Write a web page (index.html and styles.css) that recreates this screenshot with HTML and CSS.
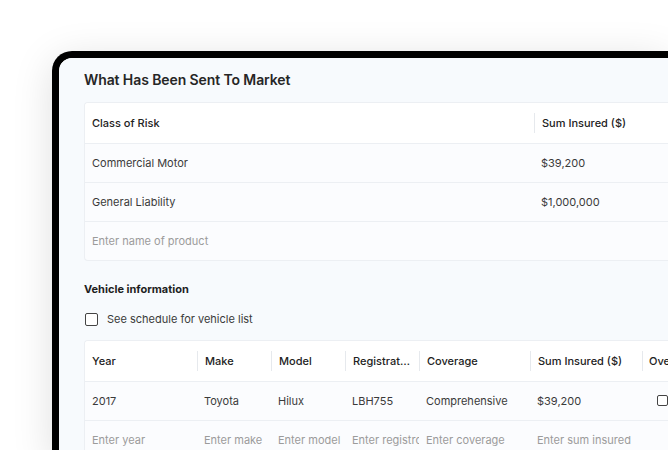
FILE: index.html
```html
<!DOCTYPE html>
<html>
<head>
<meta charset="utf-8">
<link rel="stylesheet" href="styles.css">
</head>
<body>
<div class="device">
  <div class="screen">
    <h1 class="title">What Has Been Sent To Market</h1>

    <div class="card risk">
      <div class="row head">
        <div class="cell c-class">Class of Risk</div>
        <div class="cell c-sum sep">Sum Insured ($)</div>
      </div>
      <div class="row">
        <div class="cell c-class">Commercial Motor</div>
        <div class="cell c-sum">$39,200</div>
      </div>
      <div class="row">
        <div class="cell c-class">General Liability</div>
        <div class="cell c-sum">$1,000,000</div>
      </div>
      <div class="row">
        <div class="cell c-class ph">Enter name of product</div>
        <div class="cell c-sum"></div>
      </div>
    </div>

    <h2 class="subtitle">Vehicle information</h2>
    <label class="check-row"><span class="box"></span><span>See schedule for vehicle list</span></label>

    <div class="card vehicles">
      <div class="row head">
        <div class="cell w-year">Year</div>
        <div class="cell w-make sep">Make</div>
        <div class="cell w-model sep">Model</div>
        <div class="cell w-reg sep">Registration</div>
        <div class="cell w-cov sep">Coverage</div>
        <div class="cell w-sum sep">Sum Insured ($)</div>
        <div class="cell w-over sep">Over</div>
      </div>
      <div class="row">
        <div class="cell w-year">2017</div>
        <div class="cell w-make">Toyota</div>
        <div class="cell w-model">Hilux</div>
        <div class="cell w-reg">LBH755</div>
        <div class="cell w-cov">Comprehensive</div>
        <div class="cell w-sum">$39,200</div>
        <div class="cell w-over"><span class="box small"></span></div>
      </div>
      <div class="row">
        <div class="cell w-year ph">Enter year</div>
        <div class="cell w-make ph">Enter make</div>
        <div class="cell w-model ph">Enter model</div>
        <div class="cell w-reg ph">Enter registrc</div>
        <div class="cell w-cov ph">Enter coverage</div>
        <div class="cell w-sum ph">Enter sum insured</div>
        <div class="cell w-over"></div>
      </div>
    </div>
  </div>
</div>
</body>
</html>
```

FILE: styles.css
```css
html, body {
  margin: 0;
  padding: 0;
  background: #ffffff;
  overflow: hidden;
  width: 668px;
  height: 450px;
}

body {
  font-family: "Inter", "Open Sans", sans-serif;
  color: #333;
}

.device {
  margin: 51px 0 0 52px;
  width: 609px;
  height: 400px;
  border: 7px solid #000;
  border-right: none;
  border-bottom: none;
  border-radius: 20px 0 0 0;
  box-shadow: 0 8px 40px rgba(0, 0, 0, 0.13);
  overflow: hidden;
}

.screen {
  background: #f7fafd;
  height: 100%;
  padding: 12px 0 0 25px;
  border-radius: 13px 0 0 0;
  overflow: hidden;
}

.title {
  margin: 0;
  font-size: 14px;
  line-height: 20px;
  font-weight: 600;
  color: #262626;
  letter-spacing: -0.1px;
}

.card {
  border: 1px solid #eceff3;
  border-right: none;
  border-radius: 4px 0 0 4px;
  background: #fbfcfe;
  overflow: hidden;
}

.risk {
  margin-top: 12px;
}

.row {
  display: flex;
  height: 38px;
  align-items: center;
  border-top: 1px solid #eceff3;
  font-size: 11px;
  color: #3a3a3a;
}

.row.head {
  height: 40px;
  border-top: none;
  background: #ffffff;
  color: #222;
  font-weight: 500;
}

.cell {
  flex: none;
  box-sizing: border-box;
  padding: 0 2px 0 7px;
  white-space: nowrap;
  overflow: hidden;
  text-overflow: clip;
  line-height: 20px;
  height: 20px;
}

.head .cell {
  padding-right: 8px;
  text-overflow: ellipsis;
}

.head .cell.sep {
  border-left: 1px solid #e6e9ed;
}

.c-class { width: 449px; }
.c-sum { width: 130px; }

.ph {
  color: #9b9b9b;
}

.subtitle {
  margin: 20px 0 0 0;
  font-size: 11px;
  line-height: 16px;
  font-weight: 700;
  color: #1e1e1e;
}

.check-row {
  display: flex;
  align-items: center;
  gap: 9px;
  margin-top: 14px;
  margin-left: 1px;
  font-size: 11px;
  line-height: 16px;
  color: #3a3a3a;
}

.box {
  display: inline-block;
  width: 13px;
  height: 13px;
  box-sizing: border-box;
  border: 1.5px solid #444;
  border-radius: 2px;
  background: #fff;
}

.box.small {
  width: 11px;
  height: 11px;
  margin-top: 4px;
}

.vehicles {
  margin-top: 13px;
}

.w-year { width: 112px; }
.w-make { width: 74px; }
.w-model { width: 74px; }
.w-reg { width: 74px; }
.w-cov { width: 111px; }
.w-sum { width: 112px; }
.w-over { width: 50px; padding-left: 15px; padding-right: 0; }
.head .w-over { padding-left: 6px; padding-right: 0; text-overflow: clip; }
```
